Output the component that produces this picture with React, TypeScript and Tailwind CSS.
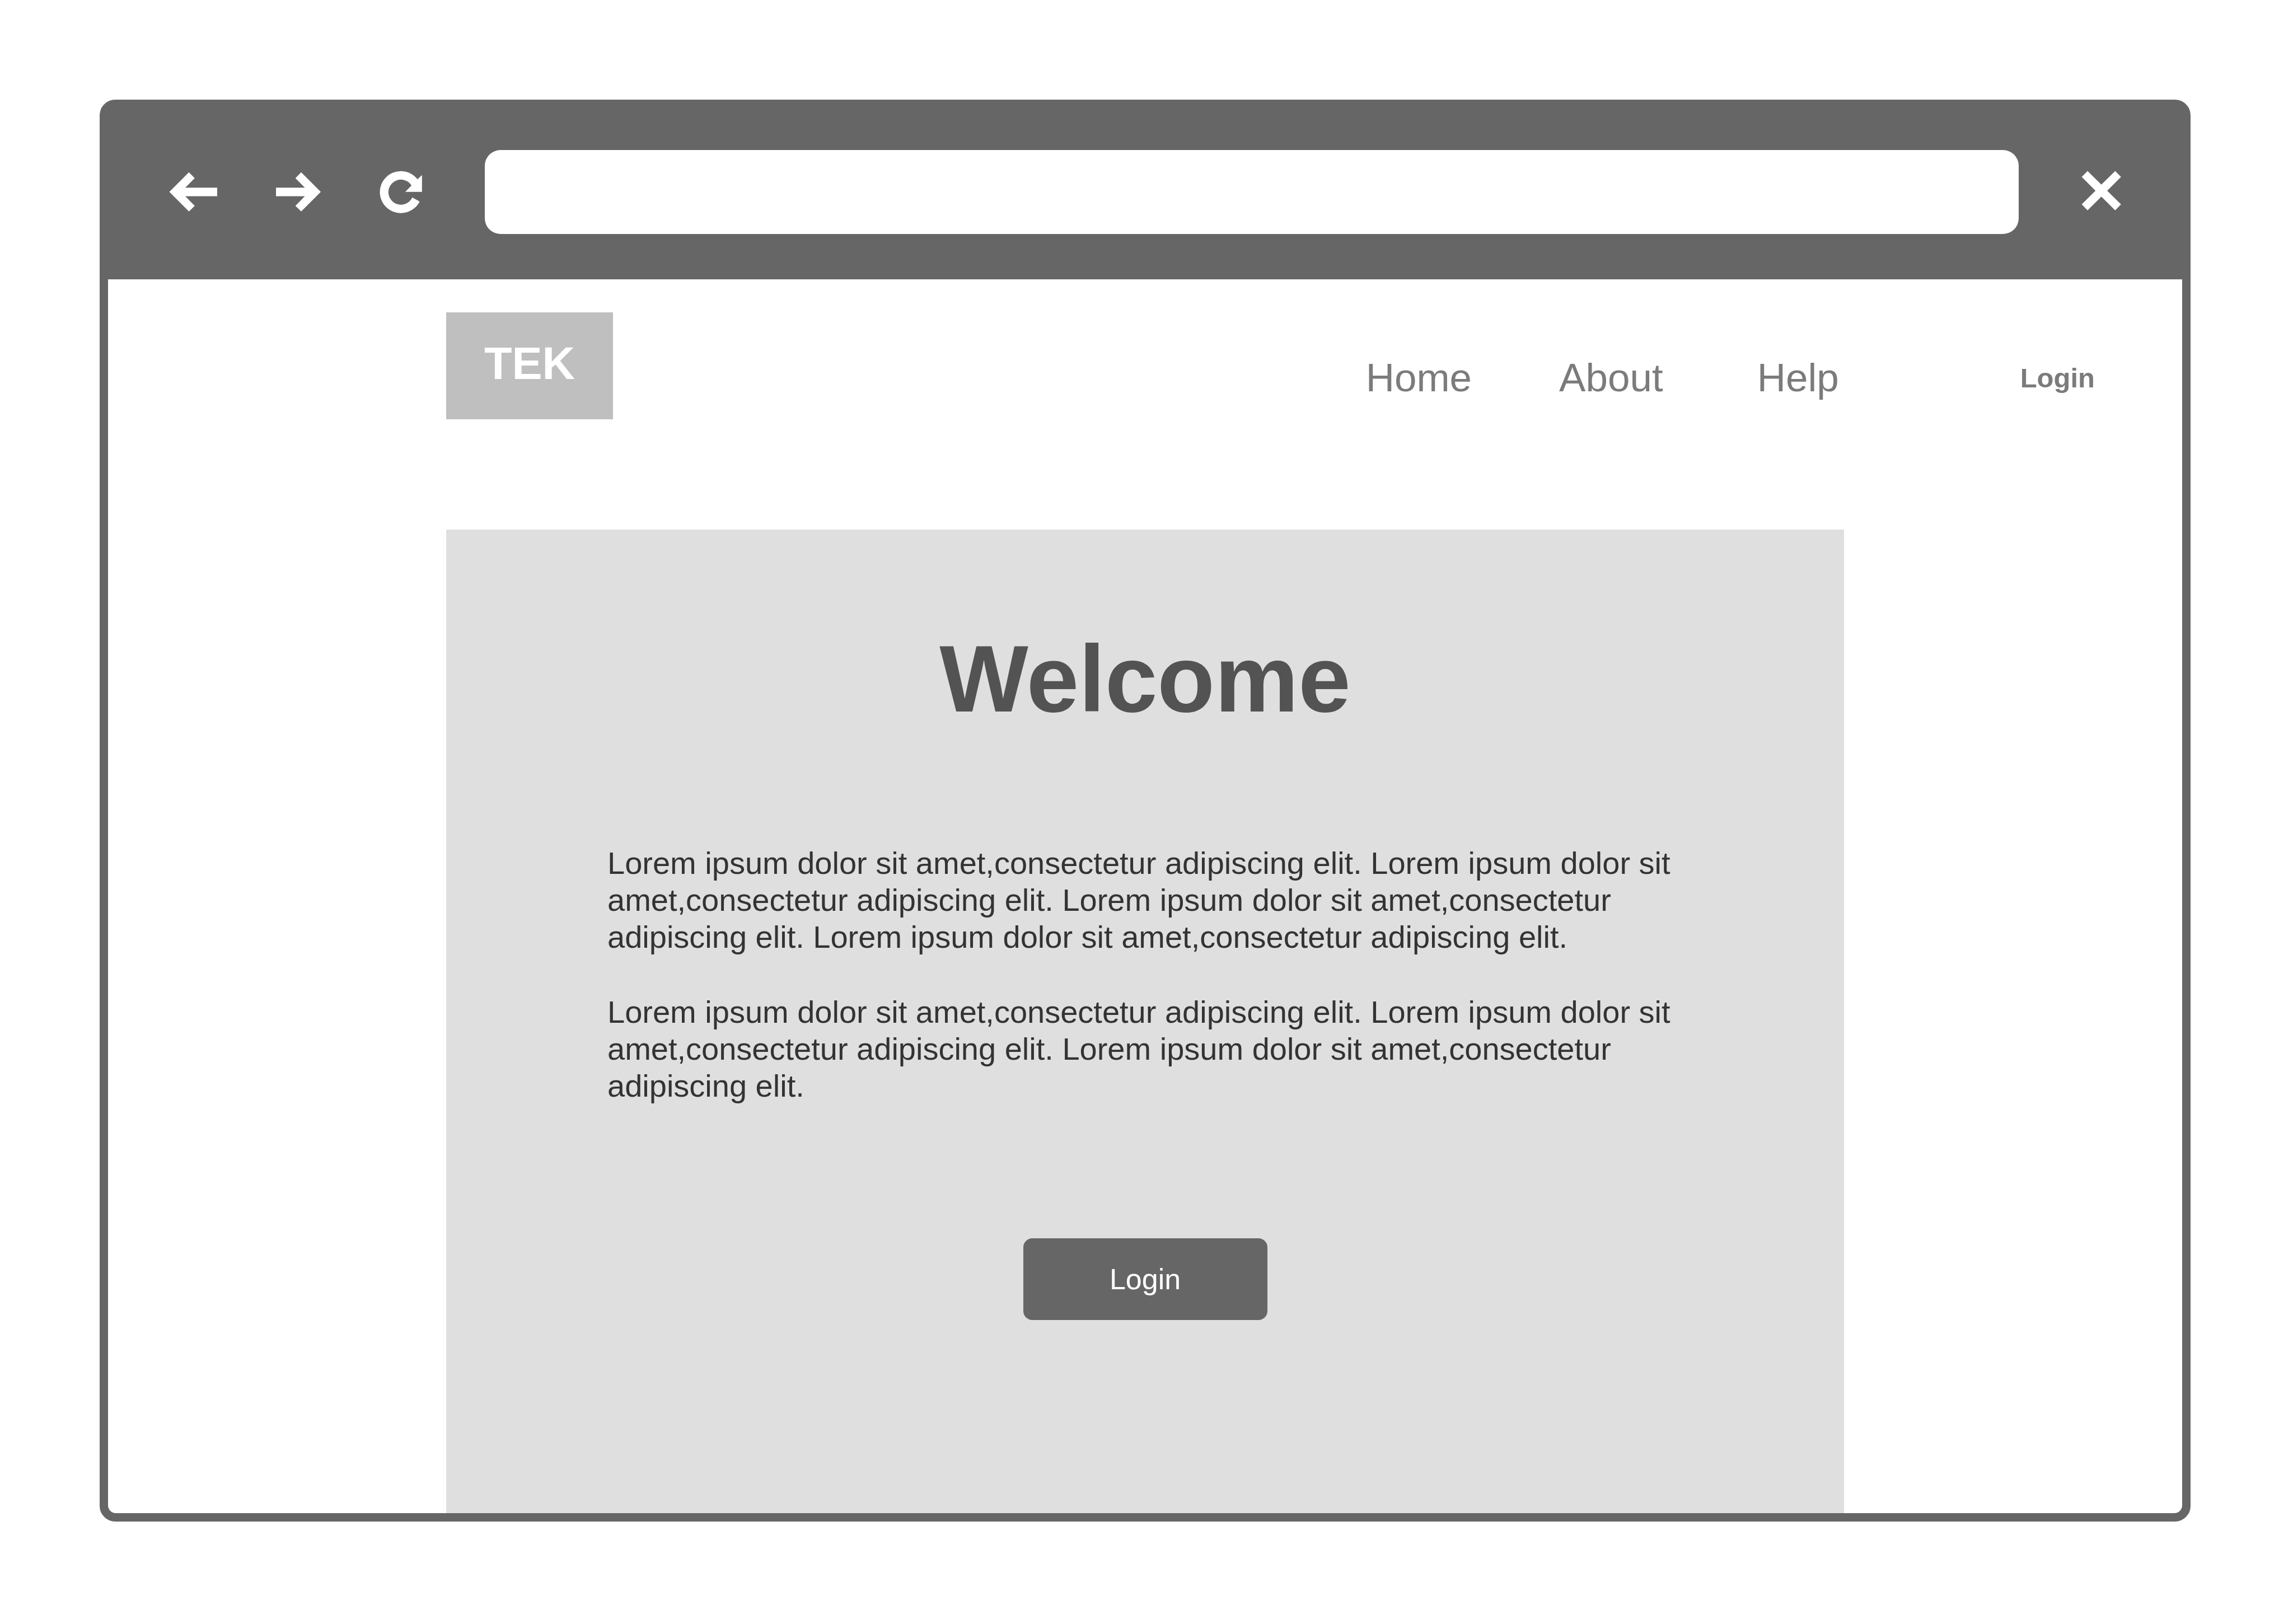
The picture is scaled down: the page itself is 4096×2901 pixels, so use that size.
import React from "react";

function BackIcon() {
  return (
    <svg viewBox="302 305 86 76" className="h-[76px] w-[86px] fill-white" aria-hidden="true">
      <path d="M302.5 342.7L337.5 307.7L347.8 318.3L331 335.2H388V350.5H331L347.8 367.7L337.5 377.7Z" />
    </svg>
  );
}

function ForwardIcon() {
  return (
    <svg viewBox="492 305 80 76" className="h-[76px] w-[80px] fill-white" aria-hidden="true">
      <path d="M572 342.7L537 307.7L526.7 318.3L543.5 335.2H492V350.5H543.5L526.7 367.7L537 377.7Z" />
    </svg>
  );
}

function ReloadIcon() {
  return (
    <svg viewBox="678 305 76 76" className="size-[76px] fill-white" aria-hidden="true">
      <path d="M745.8 320.3L753.8 312.8V342.7H723.9L735.1 331.2A22.4 22.4 0 1 0 736.5 352.8L749.6 359.9A37.5 37.5 0 1 1 745.8 320.3Z" />
    </svg>
  );
}

function CloseIcon() {
  return (
    <svg viewBox="3718 305 71 76" className="h-[76px] w-[71px] fill-white" aria-hidden="true">
      <path d="M3718.6 316L3729 305.4L3753.7 329.8L3778.4 305.4L3788.8 316L3764.1 340.7L3788.8 365.1L3778.4 375.7L3753.7 351.3L3729 375.7L3718.6 365.1L3743.2 340.7Z" />
    </svg>
  );
}

function Toolbar() {
  return (
    <div className="flex h-[306px] shrink-0 items-start px-[109px] pt-[75px]">
      <div className="flex h-[150px] items-center gap-[105px]">
        <button type="button" aria-label="Back"><BackIcon /></button>
        <button type="button" aria-label="Forward"><ForwardIcon /></button>
        <button type="button" aria-label="Reload"><ReloadIcon /></button>
      </div>
      <input
        type="text"
        aria-label="Address"
        className="ml-[112px] h-[150px] min-w-0 flex-1 rounded-[28px] bg-white px-12 text-[52px] outline-none"
      />
      <button type="button" aria-label="Close" className="ml-[112px] flex h-[150px] items-center">
        <CloseIcon />
      </button>
    </div>
  );
}

function SiteHeader() {
  return (
    <header className="flex items-start justify-between pt-[59px] pr-[156px] pl-[604px]">
      <a href="#" className="flex h-[191px] w-[298px] justify-center bg-[#bfbfbf] pt-[45px] text-[81px] leading-[92px] font-bold text-white">
        TEK
      </a>
      <nav className="flex items-center pt-[76px] text-[71px] leading-[82px] text-[#7b7b7b]">
        <a href="#">Home</a>
        <a href="#" className="ml-[156px]">About</a>
        <a href="#" className="ml-[168px]">Help</a>
        <a href="#" className="ml-[324px] text-[49px] font-bold">Login</a>
      </nav>
    </header>
  );
}

function Welcome() {
  return (
    <main className="mx-[604px] mt-[197px] flex flex-1 flex-col items-center bg-[#dfdfdf] px-[288px] pt-[171px]">
      <h1 className="text-[168px] leading-[192px] font-bold text-[#535353]">Welcome</h1>
      <div className="mt-[200px] flex w-full flex-col gap-[68px] text-[56px] leading-[66px] text-[#333333]">
        <p>
          Lorem ipsum dolor sit amet,consectetur adipiscing elit. Lorem ipsum dolor sit
          <br />
          amet,consectetur adipiscing elit. Lorem ipsum dolor sit amet,consectetur
          <br />
          adipiscing elit. Lorem ipsum dolor sit amet,consectetur adipiscing elit.
        </p>
        <p>
          Lorem ipsum dolor sit amet,consectetur adipiscing elit. Lorem ipsum dolor sit
          <br />
          amet,consectetur adipiscing elit. Lorem ipsum dolor sit amet,consectetur
          <br />
          adipiscing elit.
        </p>
      </div>
      <button
        type="button"
        className="mt-[239px] h-[146px] w-[436px] rounded-[16px] bg-[#666666] text-[52px] leading-[58px] text-white"
      >
        Login
      </button>
    </main>
  );
}

export default function App() {
  return (
    <div className="flex min-h-screen bg-white pt-[178px] pr-[183px] pb-[183px] pl-[178px] font-['Liberation_Sans',Arial,sans-serif]">
      <div className="flex flex-1 flex-col rounded-[28px] border-[15px] border-[#666666] bg-[#666666]">
        <Toolbar />
        <div className="flex flex-1 flex-col overflow-hidden rounded-b-[14px] bg-white">
          <SiteHeader />
          <Welcome />
        </div>
      </div>
    </div>
  );
}
